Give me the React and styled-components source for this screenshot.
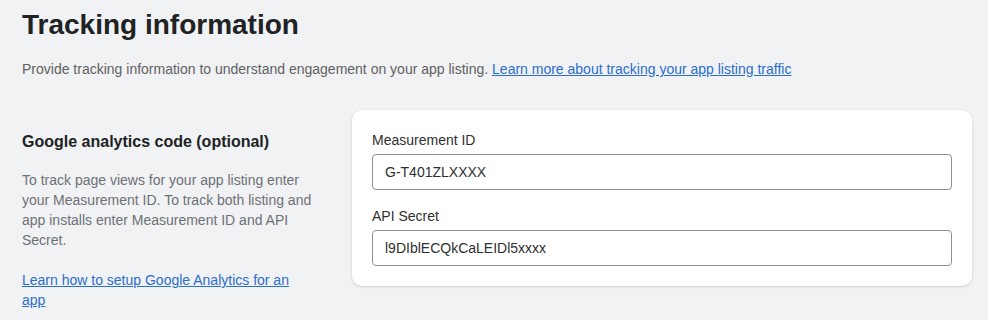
import styled, { createGlobalStyle } from "styled-components";

const GlobalStyle = createGlobalStyle`
  html, body {
    margin: 0;
    padding: 0;
    background-color: #f1f2f4;
  }

  body {
    font-family: "Liberation Sans", Arial, sans-serif;
    color: #202223;
  }

  * {
    box-sizing: border-box;
  }
`;

const fields = [
  { id: "measurement-id", label: "Measurement ID", value: "G-T401ZLXXXX" },
  { id: "api-secret", label: "API Secret", value: "l9DIblECQkCaLEIDl5xxxx" },
];

const App = () => {
  return (
    <>
      <GlobalStyle />
      <Page>
        <Title>Tracking information</Title>
        <Subtitle>
          Provide tracking information to understand engagement on your app
          listing. <Link href="#">Learn more about tracking your app listing traffic</Link>
        </Subtitle>

        <Section>
          <Aside>
            <SectionTitle>Google analytics code (optional)</SectionTitle>
            <Description>
              To track page views for your app listing enter your Measurement
              ID. To track both listing and app installs enter Measurement ID
              and API Secret.
            </Description>
            <Description>
              <Link href="#">Learn how to setup Google Analytics for an app</Link>
            </Description>
          </Aside>

          <Card>
            {fields.map((field) => (
              <Field key={field.id}>
                <FieldLabel htmlFor={field.id}>{field.label}</FieldLabel>
                <TextInput id={field.id} type="text" value={field.value} readOnly />
              </Field>
            ))}
          </Card>
        </Section>
      </Page>
    </>
  );
};

export default App;

const Page = styled.div`
  padding: 9px 16px 0 22px;
`;

const Title = styled.h1`
  margin: 0;
  font-size: 28px;
  line-height: 32px;
  font-weight: 700;
  color: #202223;
`;

const Subtitle = styled.p`
  margin: 18px 0 0;
  font-size: 14px;
  line-height: 20px;
  color: #616161;
`;

const Link = styled.a`
  color: #2c6ecb;
  text-decoration: underline;
`;

const Section = styled.div`
  display: flex;
  align-items: flex-start;
  gap: 40px;
  margin-top: 31px;
`;

const Aside = styled.div`
  flex: 0 0 290px;
  padding-top: 20px;
`;

const SectionTitle = styled.h2`
  margin: 0 0 16px;
  font-size: 16px;
  line-height: 24px;
  font-weight: 700;
  color: #202223;
`;

const Description = styled.p`
  margin: 0 0 20px;
  font-size: 14px;
  line-height: 20px;
  color: #6d7175;
`;

const Card = styled.div`
  flex: 1;
  display: flex;
  flex-direction: column;
  gap: 16px;
  padding: 20px;
  background-color: #fff;
  border-radius: 10px;
  box-shadow: 0 1px 3px rgba(0, 0, 0, 0.12), 0 0 0 1px rgba(0, 0, 0, 0.02);
`;

const Field = styled.div`
  display: flex;
  flex-direction: column;
  gap: 4px;
`;

const FieldLabel = styled.label`
  font-size: 14px;
  line-height: 20px;
  color: #303030;
`;

const TextInput = styled.input`
  width: 100%;
  height: 36px;
  padding: 0 12px;
  font-family: "Liberation Sans", Arial, sans-serif;
  font-size: 14px;
  color: #303030;
  background-color: #fff;
  border: 1px solid #8c9196;
  border-radius: 4px;
  outline: none;
`;
